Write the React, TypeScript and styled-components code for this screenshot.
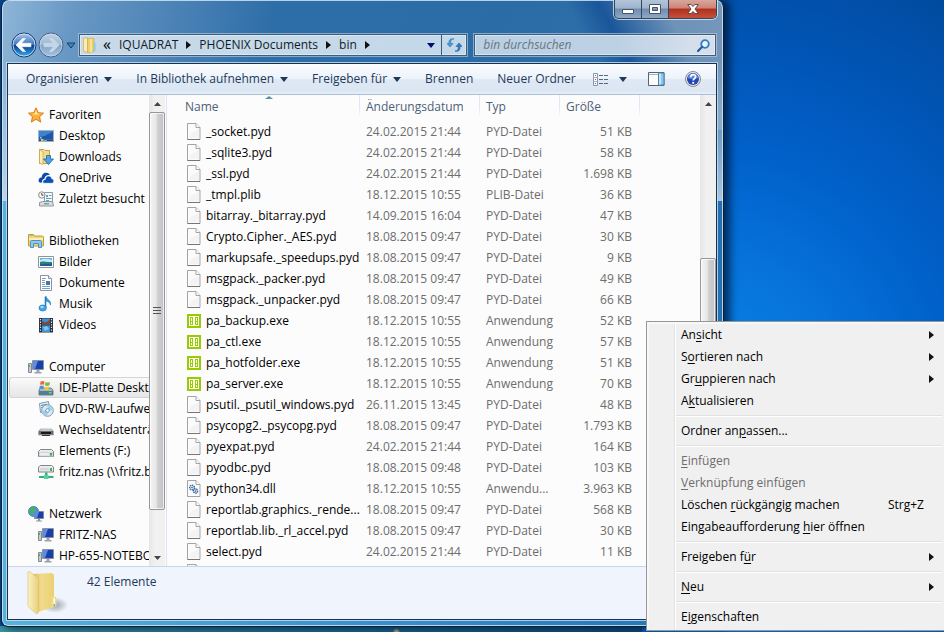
import React from "react";
import styled, { createGlobalStyle, css } from "styled-components";

const GlobalStyle = createGlobalStyle`
  *, *::before, *::after { box-sizing: border-box; }
  html, body { margin: 0; padding: 0; }
  body { font-family: "Open Sans", "Noto Sans", sans-serif; font-size: 12px; line-height: 16px; color: #000; }
  button, input { font: inherit; color: inherit; margin: 0; }
  button { background: none; border: 0; padding: 0; text-align: left; }
  ul { list-style: none; margin: 0; padding: 0; }
`;

/* ---------- desktop and window frame ---------- */

const Desktop = styled.div`
  position: relative;
  display: flex;
  height: 100vh;
  overflow: hidden;
  padding: 0 220px 5px 1px;
  background:
    radial-gradient(circle at 42% 100%, #c9ad7c 0, #c9ad7c 1px, transparent 4px),
    linear-gradient(90deg, #3a97a0 0, #1f6f96 30%, #0b4a7c 68%, transparent 68%) bottom / 100% 6px no-repeat,
    radial-gradient(circle at 700px 400px, #0b86ea 0, #0672da 150px, #0161cb 250px, #0154b4 370px, #014a9c 480px);
`;

const Window = styled.main`
  flex: 1;
  min-width: 0;
  display: flex;
  flex-direction: column;
  border: 1px solid #0c1f33;
  border-top: 0;
  border-radius: 8px 8px 7px 7px;
  padding: 0 6px 6px 5px;
  background:
    linear-gradient(180deg, rgba(255, 255, 255, 0.02) 60px, rgba(215, 232, 245, 0.72) 201px, transparent 201px) no-repeat,
    linear-gradient(100deg, rgba(165, 198, 226, 0.8) 0, rgba(140, 178, 214, 0.6) 70px, rgba(100, 150, 200, 0) 270px) top / 100% 201px no-repeat,
    linear-gradient(62deg, transparent 80%, rgba(20, 80, 150, 0.9) 84%, rgba(110, 146, 184, 0.95) 92%, #7595ba 100%) top / 100% 130px no-repeat,
    linear-gradient(90deg, #57b2dc 0, #3a90cc 50%, #2371b4 100%) bottom / 100% calc(100% - 201px) no-repeat,
    linear-gradient(100deg, #2e6da8 0, #2769a5 60%, #2d6fac 100%);
  box-shadow:
    inset 0 0 0 1px rgba(205, 228, 244, 0.85),
    4px 0 9px 2px rgba(0, 15, 40, 0.7);
`;

const CaptionBar = styled.div`
  display: flex;
  justify-content: flex-end;
  height: 19px;
`;

const CaptionGroup = styled.div`
  display: flex;
  border: 1px solid #33455c;
  border-top: 0;
  border-radius: 0 0 5px 5px;
  overflow: hidden;
  box-shadow: 0 0 0 1px rgba(220, 232, 243, 0.8);
`;

const CaptionButton = styled.button<{ $close?: boolean }>`
  display: grid;
  place-items: center;
  width: ${(p) => (p.$close ? 47 : 27)}px;
  height: 18px;
  border-right: 1px solid #33455c;
  background: ${(p) =>
    p.$close
      ? "linear-gradient(#d9a69c 0, #cb8477 45%, #b0301c 50%, #c4513c 100%)"
      : "linear-gradient(#b3c4d8 0, #9fb3cc 45%, #6f8cae 50%, #8fa9c6 100%)"};
  &:last-child { border-right: 0; }
`;

const AddressRow = styled.div`
  display: flex;
  align-items: center;
  height: 24px;
  margin: 14px 0 6px;
  padding-left: 4px;
`;

const HistoryButtons = styled.div`
  display: flex;
  align-items: center;
  width: 68px;
  flex: none;
`;

const PlainButton = styled.button<{ $gap?: number }>`
  display: grid;
  place-items: center;
  flex: none;
  margin-left: ${(p) => p.$gap ?? 0}px;
`;

const fieldFrame = css`
  display: flex;
  align-items: center;
  min-width: 0;
  height: 22px;
  border: 1px solid #3f5c7c;
  box-shadow: 0 0 0 1px rgba(190, 214, 234, 0.6), inset 0 0 0 1px rgba(235, 243, 250, 0.6);
`;

const AddressField = styled.div`
  ${fieldFrame}
  flex: 382 1 0;
  padding-left: 3px;
  background: linear-gradient(90deg, #c8dae9, #c3d8e9);
`;

const SearchField = styled.label`
  ${fieldFrame}
  flex: 226 1 0;
  margin: 0 1px 0 7px;
  padding: 0 5px 0 8px;
  background: linear-gradient(100deg, #b9d0e3 0, #bdd1e5 60%, #d4dfeb 90%);
`;

const SearchInput = styled.input`
  flex: 1;
  min-width: 0;
  border: 0;
  padding: 0;
  outline: 0;
  background: transparent;
  font-style: italic;
  &::placeholder { color: #6b7681; opacity: 1; }
`;

const Crumb = styled.button`
  padding: 0 8px;
  white-space: nowrap;
  color: #111c28;
`;

const Chevrons = styled.span`
  width: 14px;
  text-align: right;
  font-size: 16px;
  line-height: 16px;
  padding-bottom: 2px;
`;

const FieldSpacer = styled.span`
  flex: 1;
`;

const RefreshButton = styled.button`
  display: grid;
  place-items: center;
  width: 25px;
  height: 20px;
  margin-left: 6px;
  border-left: 1px solid #3f5c7c;
`;

/* ---------- client area ---------- */

const Client = styled.div`
  flex: 1;
  min-height: 0;
  display: flex;
  flex-direction: column;
  border: 1px solid #173350;
  box-shadow: 0 0 0 1px rgba(195, 220, 240, 0.85);
  background: #fcfcfc;
`;

const Toolbar = styled.div`
  display: flex;
  align-items: center;
  flex: none;
  height: 31px;
  padding: 0 15px 0 6px;
  border-bottom: 1px solid #a9bfd6;
  background: linear-gradient(#fbfdff 0, #edf3fb 48%, #dfe9f5 52%, #dbe6f3 90%, #e8f0f9 100%);
`;

const ToolButton = styled.button`
  display: flex;
  align-items: center;
  gap: 6px;
  padding: 0 12px;
  white-space: nowrap;
  color: #1e395b;
`;

const ToolIcons = styled.div`
  display: flex;
  align-items: center;
  margin-left: auto;
`;

const ToolIcon = styled.button<{ $gap: number }>`
  display: grid;
  place-items: center;
  margin-left: ${(p) => p.$gap}px;
`;

const Body = styled.div`
  flex: 1;
  min-height: 0;
  display: flex;
`;

const NavPane = styled.nav`
  width: 141px;
  flex: none;
  overflow: hidden;
  padding: 9px 0 0 1px;
`;

const NavGroup = styled.ul`
  margin-bottom: 21px;
`;

const NavItem = styled.li<{ $selected?: boolean }>`
  border: 1px solid transparent;
  border-right: 0;
  border-radius: 3px 0 0 3px;
  ${(p) =>
    p.$selected &&
    css`
      border-color: #d5d5d5;
      background: linear-gradient(#fafafa, #e6e6e6);
    `}
`;

const NavLink = styled.a<{ $root?: boolean }>`
  display: flex;
  align-items: center;
  gap: 5px;
  height: 19px;
  padding-left: ${(p) => (p.$root ? 18 : 28)}px;
  white-space: nowrap;
  color: #000;
  text-decoration: none;
  svg { flex: none; }
`;

const ScrollBar = styled.div<{ $tail?: boolean }>`
  display: flex;
  flex-direction: column;
  flex: none;
  width: 16px;
  margin-right: ${(p) => (p.$tail ? 0 : 1)}px;
  background: linear-gradient(90deg, #e6e6e6, #f1f1f1 40%, #f0f0f0);
`;

const ScrollButton = styled.button`
  display: grid;
  place-items: center;
  height: 17px;
  flex: none;
`;

const Track = styled.div`
  flex: 1;
  display: flex;
  flex-direction: column;
`;

const Gap = styled.div<{ $grow: number }>`
  flex: ${(p) => p.$grow} 1 0;
`;

const Thumb = styled.div<{ $grow: number }>`
  flex: ${(p) => p.$grow} 1 0;
  display: grid;
  place-items: center;
  border: 1px solid #979797;
  border-radius: 2px;
  box-shadow: inset 0 0 0 1px rgba(255, 255, 255, 0.7);
  background: linear-gradient(90deg, #f4f4f4 0, #e6e6e6 45%, #cfcfcf 55%, #c3c3c8 100%);
`;

const FilePane = styled.section`
  flex: 1;
  min-width: 0;
  overflow: hidden;
  border-left: 1px solid #d9e5f2;
`;

const FileTable = styled.table`
  width: 100%;
  table-layout: fixed;
  border-collapse: collapse;
`;

const HeadCell = styled.th<{ $sorted?: boolean }>`
  height: 26px;
  padding: ${(p) => (p.$sorted ? "1px 8px 0 18px" : "4px 0 0 6px")};
  vertical-align: top;
  text-align: left;
  font-weight: 400;
  color: #4c607a;
  background: linear-gradient(#dfe8f4, #dfe8f4 60%, transparent) right top / 1px 22px no-repeat;
  &:last-child { background: none; }
`;

const HeadLabel = styled.span`
  display: block;
  white-space: nowrap;
`;

const SortMark = styled.svg`
  display: block;
  margin: 0 auto;
`;

const Cell = styled.td<{ $kind?: "name" | "size" }>`
  height: 21px;
  padding: ${(p) => (p.$kind === "name" ? "0 0 0 20px" : p.$kind === "size" ? "0 8px 0 0" : "0 0 0 6px")};
  overflow: hidden;
  white-space: nowrap;
  text-align: ${(p) => (p.$kind === "size" ? "right" : "left")};
  color: ${(p) => (p.$kind === "name" ? "#000" : "#6d6d6d")};
`;

const FileName = styled.span`
  display: flex;
  align-items: center;
  gap: 5px;
  svg { flex: none; }
`;

const DetailsPane = styled.footer`
  flex: none;
  display: flex;
  height: 53px;
  border-top: 1px solid #c5d7ea;
  padding: 4px 0 0 19px;
  gap: 18px;
  background: #f0f4fc;
  color: #1e395b;
`;

const DetailsText = styled.p`
  margin: 3px 0 0;
`;

/* ---------- context menu ---------- */

const Menu = styled.div`
  position: absolute;
  right: 0;
  bottom: 1px;
  width: 298px;
  padding: 2px 2px 2px 2px;
  border: 1px solid #979797;
  border-right: 0;
  background: linear-gradient(90deg, #f0f0f0 0, #f0f0f0 27px, #e2e3e3 27px, #e2e3e3 28px, #fff 28px, #fff 29px, #f0f0f0 29px);
  box-shadow: inset 1px 1px 0 1px #f7f7f7;
`;

const MenuItem = styled.button`
  display: flex;
  align-items: center;
  width: 100%;
  height: 22px;
  padding: 0 8px 0 32px;
  white-space: nowrap;
  color: #000;
  &:disabled { color: #6d6d6d; }
`;

const MenuText = styled.span`
  flex: 1;
  u { text-underline-offset: 2px; }
`;

const Shortcut = styled.span`
  padding-right: 10px;
`;

const MenuRule = styled.hr`
  height: 2px;
  margin: 3px 0 3px 27px;
  border: 0;
  border-top: 1px solid #e0e0e0;
  border-bottom: 1px solid #fff;
`;

/* ---------- icons ---------- */

const I = ({ w = 16, h = 16, children }: { w?: number; h?: number; children: React.ReactNode }) => (
  <svg width={w} height={h} viewBox={`0 0 ${w} ${h}`} aria-hidden="true">{children}</svg>
);

const Down = ({ fill = "#1e395b" }: { fill?: string }) => (
  <I w={8} h={5}><path d="M0 0h8L4 5z" fill={fill} /></I>
);
const Right = () => <I w={5} h={8}><path d="M0 0l5 4-5 4z" fill="#111" /></I>;

const PageIcon = () => (
  <I w={14} h={17}>
    <path d="M.5.5h8.500l4 4v12H.5z" fill="#fbfbfb" stroke="#a3a3a3" />
    <path d="M2 15h10V6L4 10z" fill="#f0f0f0" opacity=".7" />
    <path d="M9 .5v4h4" fill="#fff" stroke="#a3a3a3" />
    <path d="M.5 16.500h12.500" stroke="#7a7474" />
  </I>
);
const DllIcon = () => (
  <I w={14} h={17}>
    <path d="M.5.5h8.500l4 4v12H.5z" fill="#fbfbfb" stroke="#a3a3a3" />
    <path d="M9 .5v4h4" fill="#fff" stroke="#a3a3a3" />
    <circle cx="5" cy="7.500" r="2.400" fill="#d7e6f5" stroke="#2f5f98" strokeWidth="1.200" strokeDasharray="1.400 .6" />
    <circle cx="5" cy="7.500" r=".8" fill="#2f5f98" />
    <circle cx="8.500" cy="11" r="2.200" fill="#d7e6f5" stroke="#2f5f98" strokeWidth="1.200" strokeDasharray="1.400 .6" />
    <circle cx="8.500" cy="11" r=".8" fill="#2f5f98" />
  </I>
);
const ExeIcon = () => (
  <I w={14} h={14}>
    <path d="M0 0h14v14H0z" fill="#99cc00" />
    <path d="M2 2h10v10H2z" fill="#fff" />
    <path d="M3 3h3v8H3zM8 3h3v8H8z" fill="#99cc00" />
    <path d="M4 4h1v3H4zM4 8h1v2H4zM9 4h1v3H9zM9 8h1v2H9z" fill="#fff" />
  </I>
);
const StarIcon = () => (
  <I>
    <path d="M8 .8l2.200 4.900 5.300.5-4 3.600 1.200 5.300L8 12.300l-4.700 2.800 1.200-5.300-4-3.600 5.300-.5z" fill="#fbb03a" stroke="#d97a1c" strokeLinejoin="round" />
    <path d="M8 2.800l1.500 3.700 3.500.4-5 .9-4.800-1 3.400-.3z" fill="#fde39a" />
  </I>
);
const DesktopIcon = () => (
  <I>
    <path d="M0 2h16v12H0z" fill="#9db4cc" />
    <path d="M1 3h14v8.500H1z" fill="#1f55ad" />
    <path d="M1 9C6 9 10 6 15 3.500V3H1z" fill="#3f83cf" />
    <path d="M1 11.500h14V13H1z" fill="#27466f" />
    <path d="M2 9h1.500v1.500H2z" fill="#9fd4ff" /><path d="M3 11h2.500v2H3z" fill="#f2c93d" />
    <path d="M6 12h3v1H6z" fill="#59a7ee" />
  </I>
);
const DownloadIcon = () => (
  <I>
    <path d="M1.500.5H6l1 1h4.500v13h-10z" fill="#f3dc87" stroke="#c7a046" />
    <path d="M1.500.5L5 3v12.500L1.500 14z" fill="#fbefb5" stroke="#c7a046" strokeWidth=".7" />
    <path d="M8.500 6.500h4V10H15.500l-5 5.500-5-5.500h3z" fill="#4da3e6" stroke="#1e62ab" strokeWidth=".8" strokeLinejoin="round" />
  </I>
);
const OneDriveIcon = () => (
  <I>
    <path d="M.8 11.500C0 8.800 2 7.200 3.800 7.400 3.700 4.500 6 2.600 8.300 2.800c1.800.1 3 1 3.600 2.300-3.200-.6-5.200 1.300-5.500 3.600-2 .2-2.600 1.800-2.200 3.800-1.400.3-2.900.2-3.400-1z" fill="#0a4aa8" />
    <path d="M5.200 13.300c-1-2.400.3-3.900 2.100-3.900 0-2.200 1.700-3.700 3.600-3.500 1.600.2 2.700 1.200 2.900 2.900 1.500.2 2.300 1.400 2 2.700-.2 1-1 1.800-2 1.800z" fill="#0d4fb4" stroke="#fff" strokeWidth=".7" />
  </I>
);
const RecentIcon = () => (
  <I>
    <path d="M6.500 1.500h8v10h-8z" fill="#f4f8fb" stroke="#8c98a3" />
    <path d="M8 4h2v2H8zM11 4h2.500v1H11zM8 7h5.500v1H8zM8 9h3v1.500H8z" fill="#5d9fce" />
    <path d="M1.500 11.500l3-1h10l1 4.500h-14z" fill="#d9dde0" stroke="#8c98a3" />
    <path d="M6 12h5v1.500H6z" fill="#6ab389" />
    <circle cx="3.800" cy="4" r="3.200" fill="#f6f6f6" stroke="#8e8e8e" /><path d="M3.800 2v2.200h1.700" fill="none" stroke="#555" />
  </I>
);
const LibraryIcon = () => (
  <I>
    <path d="M.5 13V1.500h5l1 1.500h8l1 1v9z" fill="#f0d67a" stroke="#c39c3a" />
    <path d="M2 1.500h3v1H2z" fill="#5fb75a" />
    <path d="M1 5h14v2H1z" fill="#fcf0b8" />
    <path d="M2.500 14.500V9c0-1 .5-1.500 1.500-1.500h8c1 0 1.500.5 1.500 1.500v5.500h-3v-4h-5v4z" fill="#8fc9ec" stroke="#4c91c3" />
  </I>
);
const PicturesIcon = () => (
  <I>
    <path d="M.5 2.500h15v11H.5z" fill="#fff" stroke="#8b95a0" />
    <path d="M2 4h12v8H2z" fill="#5daee3" /><path d="M2 6c4-2 8-1 12 0v2H2z" fill="#c9e8f7" />
    <path d="M2 8c3-1.500 6 .5 12 0v4H2z" fill="#2f7f79" /><path d="M2 10.500c5-1 8 0 12-1V12H2z" fill="#1f5a9c" />
  </I>
);
const DocIcon = () => (
  <I>
    <path d="M2.500.5h8l3 3v12h-11z" fill="#fff" stroke="#8b95a0" /><path d="M10.500.5v3h3" fill="#e8eef4" stroke="#8b95a0" />
    <path d="M4 3.500h4M4 5.500h3M4 7.500h3M4 9.500h3M4 11.500h8M4 13.500h8" stroke="#7f9fbe" />
    <path d="M8 6h4v4H8z" fill="#3f76b3" />
  </I>
);
const MusicIcon = () => (
  <I>
    <path d="M7.500.5v11" stroke="#1e7fc8" strokeWidth="1.600" />
    <path d="M8 .5c.5 3 5.500 3.500 4.500 8.500C12 6.500 10 5.500 8 5z" fill="#3aa1e2" stroke="#1b74bb" strokeWidth=".6" />
    <ellipse cx="4.700" cy="12" rx="3.700" ry="3" fill="#41a8e8" stroke="#1b74bb" strokeWidth=".7" />
    <ellipse cx="4" cy="11" rx="1.700" ry="1" fill="#b6e1fb" />
  </I>
);
const VideoIcon = () => (
  <I>
    <path d="M1 1h14v14.500H1z" fill="#26303c" />
    <path d="M4 1.500h8v6H4zM4 8.500h8v6.500H4z" fill="#3d8fd6" />
    <path d="M4 4l4 1.500 4-3v5H4z" fill="#7a4a3d" /><path d="M5 10l4-1 2 3-4 2z" fill="#7ec3f0" />
    <path d="M2.500 2v13M13.500 2v13" stroke="#e4e8ec" strokeWidth="1.200" strokeDasharray="1.300 1.300" />
  </I>
);
const ComputerIcon = () => (
  <I>
    <path d="M.5 4.500h3v9h-3z" fill="#c3cad2" stroke="#818a94" /><path d="M1 6h1v2H1z" fill="#43b54a" />
    <path d="M4.500 1.500h11v9h-11z" fill="#d4d9de" stroke="#8b929a" />
    <path d="M5 2h10v8H5z" fill="#173fae" /><path d="M5 2h5L7 10H5z" fill="#5c8ae6" />
    <path d="M8.500 11h3v2h-3zM6.500 13h7v1.500h-7z" fill="#9aa2ab" />
  </I>
);
const SystemDriveIcon = () => (
  <I>
    <path d="M1 10l2-2h10l2 2v5H1z" fill="#aeb8bf" stroke="#626b72" strokeWidth=".8" />
    <path d="M1 11h14v4H1z" fill="#4e7f93" /><path d="M11 12h2.500v1.500H11z" fill="#62e36e" />
    <path d="M2.500 1.500c1.500-.8 3-.8 4 0L6 5c-1-.6-2.500-.6-4 0z" fill="#ee6a35" />
    <path d="M7.500 2c1.500.8 3 .7 4.500 0l-.7 3.500c-1.500.6-3 .6-4.300 0z" fill="#74bb42" />
    <path d="M1.800 6c1.500-.7 2.900-.7 4 0l-.6 3c-1-.5-2.500-.5-4 0z" fill="#4a92de" />
    <path d="M6.800 6.500c1.500.7 2.900.7 4.300 0l-.6 3c-1.400.6-2.900.6-4.300 0z" fill="#f7c636" />
  </I>
);
const DvdIcon = () => (
  <I>
    <path d="M1.500 2.500l9-2 1 9-9 2z" fill="#e3eef6" stroke="#8098ab" />
    <path d="M3 4.500l6-1.200M3.200 6.500l3-.6" stroke="#3f8ac0" />
    <circle cx="9.500" cy="9.500" r="5.800" fill="#dcebf5" stroke="#7b9cb6" />
    <path d="M9.500 3.700a5.800 5.800 0 0 1 5.800 5.800l-5.800 0z" fill="#a5d0ec" /><path d="M9.500 15.300a5.800 5.800 0 0 1-5.800-5.800h5.800z" fill="#a5cbe6" />
    <circle cx="9.500" cy="9.500" r="1.800" fill="#fff" stroke="#6a93b3" />
  </I>
);
const RemovableIcon = () => (
  <I>
    <path d="M.5 9.500l2-2.500h11l2 2.500v3.500H.5z" fill="#6a6f74" stroke="#a3a8ad" strokeWidth=".8" />
    <path d="M3 7h10l1.500 2h-13z" fill="#c4c8cb" /><path d="M3 10h10v2H3z" fill="#17191b" /><path d="M4 13h8v1H4z" fill="#33373b" />
  </I>
);
const DriveIcon = () => (
  <I>
    <path d="M.5 8.500l2-2h11l2 2v5H.5z" fill="#e9ebed" stroke="#7e858b" />
    <path d="M1 9h14v4.500H1z" fill="#cfd4d8" /><path d="M2 10h9v2.500H2z" fill="#eceeef" /><path d="M12 10h2v2.500h-2z" fill="#42b04b" />
  </I>
);
const NetDriveIcon = () => (
  <I>
    <path d="M.5 3l2-1.500h11l2 1.500v5H.5z" fill="#e9ebed" stroke="#7e858b" />
    <path d="M2 4h9v2.500H2z" fill="#d4d8db" /><path d="M12 4h2v3h-2z" fill="#42b04b" />
    <path d="M7 8.500h2.500V12H7zM1 12h14.500v2H1z" fill="#35b07a" /><path d="M6 11h4.500v4H6z" fill="#5dcf9c" />
  </I>
);
const NetworkIcon = () => (
  <I>
    <circle cx="5.500" cy="5.500" r="5" fill="#3f9ae0" stroke="#2b74b3" strokeWidth=".8" />
    <path d="M2 3c2-3 5-2 5 0S5 5 5 7 3 9 2 7 1 4 2 3zM8 6l2-1v3H8z" fill="#4db34f" />
    <path d="M6.500 5.500h9v7h-9z" fill="#d4d9de" stroke="#7f8891" /><path d="M7 6h8v6H7z" fill="#173fae" /><path d="M7 6h4l-2 6H7z" fill="#5c8ae6" />
    <path d="M10 13h2v1.500h-2zM8 14.500h6v1H8z" fill="#8e98a2" />
  </I>
);

const BackIcon = ({ active }: { active?: boolean }) => {
  const id = active ? "nav-back" : "nav-forward";
  return (
    <svg width="26" height="26" viewBox="0 0 26 26" aria-hidden="true">
      <defs>
        <linearGradient id={id} x1="0" y1="0" x2="0" y2="1">
          <stop offset="0" stopColor={active ? "#a9c9ee" : "#c2d3e3"} />
          <stop offset=".48" stopColor={active ? "#3d78c0" : "#9db9d3"} />
          <stop offset=".52" stopColor={active ? "#0a3f92" : "#83a4c5"} />
          <stop offset="1" stopColor={active ? "#36b2f2" : "#a5c4de"} />
        </linearGradient>
      </defs>
      <circle cx="13" cy="13" r="12" fill={`url(#${id})`} stroke={active ? "#173a68" : "#3f618a"} />
      <circle cx="13" cy="13" r="11" fill="none" stroke="#dceaf7" strokeOpacity={active ? 0.8 : 0.5} />
      <path
        d={active ? "M5 13l6.500-6.500h3L10.500 11.300H20v3.400h-9.500l4 4.800h-3z" : "M21 13l-6.500-6.500h-3l4 4.800H6v3.400h9.500l-4 4.800h3z"}
        fill={active ? "#fff" : "#c3d6e8"}
        stroke={active ? "#fff" : "#d0e0ee"}
        strokeWidth=".6"
      />
    </svg>
  );
};

const AddressFolder = () => (
  <I w={14} h={16}>
    <path d="M.5 1.500l4-.8v14.800l-4-1.500z" fill="#f9eeb0" stroke="#cfae55" strokeWidth=".7" />
    <path d="M4.500 1.500h6.500v13l-6.500 1z" fill="#ecd06e" stroke="#cfae55" strokeWidth=".7" />
    <path d="M7 2h2v13H7z" fill="#f8e59a" /><path d="M11 6h1.500v8H11z" fill="#8cc7ee" />
  </I>
);
const RefreshIcon = () => (
  <I w={15} h={14}>
    <path d="M7 1C4 1 3.500 3 3.800 5.500H6L3 9 0 5.500h2C1.500 2 3.500 0 7 1z" fill="#4f9bd8" stroke="#2c70b4" strokeWidth=".6" />
    <path d="M8 13c3 0 3.500-2 3.200-4.500H9L12 5l3 3.500h-2c.5 3.500-1.500 5.500-5 4.500z" fill="#2f7fc6" stroke="#1d5a9e" strokeWidth=".6" />
  </I>
);
const SearchIcon = () => (
  <I w={13} h={13}>
    <circle cx="8" cy="5" r="3.800" fill="#e9f4fd" stroke="#2f7cc7" strokeWidth="1.800" />
    <path d="M5.200 7.800L1 12" stroke="#26599f" strokeWidth="2.200" strokeLinecap="round" />
  </I>
);
const ViewIcon = () => (
  <I w={16} h={13}>
    <path d="M.5.500h4v12h-4z" fill="#fff" stroke="#8797aa" />
    <path d="M2 2h1v1H2z" fill="#4f81bd" /><path d="M2 6h1v1H2z" fill="#d0383b" /><path d="M2 10h1v1H2z" fill="#3e74b8" />
    <path d="M.5 4.500h4M.5 8.500h4" stroke="#a9b5c2" />
    <path d="M6 2.500h4M11 2.500h4M6 6.500h4M11 6.500h4M6 10.500h4M11 10.500h4" stroke="#54687f" />
  </I>
);
const PaneIcon = () => (
  <I w={17} h={14}>
    <path d="M.5.500h15.500v13H.5z" fill="#fdfdfd" stroke="#4f6379" />
    <path d="M1 2.500h9.500" stroke="#a3b1c0" /><path d="M10.500 1H16v12h-5.500z" fill="#8ac6ea" stroke="#4f7fa6" /><path d="M11 1.500h2v11h-2z" fill="#c5e6f8" />
  </I>
);
const HelpIcon = () => (
  <svg width="16" height="16" viewBox="0 0 16 16" aria-hidden="true">
    <circle cx="8" cy="8" r="7.500" fill="#e8e8e8" stroke="#8a8a8a" />
    <circle cx="8" cy="8" r="6" fill="#2344b4" /><path d="M2.500 7a5.600 5.600 0 0 1 11 0c-3 1.500-8 1.500-11 0z" fill="#5f86dc" />
    <path d="M5.700 6.200c0-3.400 4.900-3.200 4.900-.5C10.600 7.500 8.200 7.600 8.200 9.500" fill="none" stroke="#fff" strokeWidth="1.700" />
    <circle cx="8.200" cy="11.800" r="1.100" fill="#fff" />
  </svg>
);
const BigFolder = () => (
  <svg width="42" height="44" viewBox="0 0 42 44" aria-hidden="true">
    <defs>
      <linearGradient id="folder-front" x1="0" x2="1"><stop offset="0" stopColor="#fbf2c3" /><stop offset="1" stopColor="#e9cf7c" /></linearGradient>
      <linearGradient id="folder-back" x1="0" x2="1"><stop offset="0" stopColor="#d8b95c" /><stop offset=".4" stopColor="#f1dc8d" /><stop offset="1" stopColor="#ead06f" /></linearGradient>
      <radialGradient id="folder-shade"><stop offset="0" stopColor="#5e6470" stopOpacity=".6" /><stop offset="1" stopColor="#5e6470" stopOpacity="0" /></radialGradient>
    </defs>
    <ellipse cx="28" cy="34" rx="13" ry="8" fill="url(#folder-shade)" />
    <path d="M6 3l19-1 2 2v32l-16 5z" fill="url(#folder-back)" />
    <path d="M24 26h4c1 0 1.500.5 1.500 1.500v8L24 37z" fill="#efd984" />
    <path d="M1 1c0-.8.500-1 1.300-.5L10 6c1 .8 1.500 1.500 1.500 3v31c0 2.500-1.500 3.500-3 2L2 36.500c-.7-.5-1-1-1-2z" fill="url(#folder-front)" stroke="#d9be6c" strokeWidth=".6" />
    <path d="M26.500 27h1.500v8h-1.500z" fill="#fff" /><path d="M26.500 33h1.500v2.500h-1.500z" fill="#59aee0" />
  </svg>
);

/* ---------- data ---------- */

type NavEntry = { label: string; icon: React.ReactNode; selected?: boolean };

const navGroups: NavEntry[][] = [
  [
    { label: "Favoriten", icon: <StarIcon /> },
    { label: "Desktop", icon: <DesktopIcon /> },
    { label: "Downloads", icon: <DownloadIcon /> },
    { label: "OneDrive", icon: <OneDriveIcon /> },
    { label: "Zuletzt besucht", icon: <RecentIcon /> },
  ],
  [
    { label: "Bibliotheken", icon: <LibraryIcon /> },
    { label: "Bilder", icon: <PicturesIcon /> },
    { label: "Dokumente", icon: <DocIcon /> },
    { label: "Musik", icon: <MusicIcon /> },
    { label: "Videos", icon: <VideoIcon /> },
  ],
  [
    { label: "Computer", icon: <ComputerIcon /> },
    { label: "IDE-Platte Desktop", icon: <SystemDriveIcon />, selected: true },
    { label: "DVD-RW-Laufwerk", icon: <DvdIcon /> },
    { label: "Wechseldatenträger", icon: <RemovableIcon /> },
    { label: "Elements (F:)", icon: <DriveIcon /> },
    { label: "fritz.nas (\\\\fritz.box)", icon: <NetDriveIcon /> },
  ],
  [
    { label: "Netzwerk", icon: <NetworkIcon /> },
    { label: "FRITZ-NAS", icon: <ComputerIcon /> },
    { label: "HP-655-NOTEBOOK", icon: <ComputerIcon /> },
  ],
];

const files: [string, string, string, string][] = [
  ["_socket.pyd", "24.02.2015 21:44", "PYD-Datei", "51 KB"],
  ["_sqlite3.pyd", "24.02.2015 21:44", "PYD-Datei", "58 KB"],
  ["_ssl.pyd", "24.02.2015 21:44", "PYD-Datei", "1.698 KB"],
  ["_tmpl.plib", "18.12.2015 10:55", "PLIB-Datei", "36 KB"],
  ["bitarray._bitarray.pyd", "14.09.2015 16:04", "PYD-Datei", "47 KB"],
  ["Crypto.Cipher._AES.pyd", "18.08.2015 09:47", "PYD-Datei", "30 KB"],
  ["markupsafe._speedups.pyd", "18.08.2015 09:47", "PYD-Datei", "9 KB"],
  ["msgpack._packer.pyd", "18.08.2015 09:47", "PYD-Datei", "49 KB"],
  ["msgpack._unpacker.pyd", "18.08.2015 09:47", "PYD-Datei", "66 KB"],
  ["pa_backup.exe", "18.12.2015 10:55", "Anwendung", "52 KB"],
  ["pa_ctl.exe", "18.12.2015 10:55", "Anwendung", "57 KB"],
  ["pa_hotfolder.exe", "18.12.2015 10:55", "Anwendung", "51 KB"],
  ["pa_server.exe", "18.12.2015 10:55", "Anwendung", "70 KB"],
  ["psutil._psutil_windows.pyd", "26.11.2015 13:45", "PYD-Datei", "48 KB"],
  ["psycopg2._psycopg.pyd", "18.08.2015 09:47", "PYD-Datei", "1.793 KB"],
  ["pyexpat.pyd", "24.02.2015 21:44", "PYD-Datei", "164 KB"],
  ["pyodbc.pyd", "18.08.2015 09:48", "PYD-Datei", "103 KB"],
  ["python34.dll", "18.12.2015 10:55", "Anwendu...", "3.963 KB"],
  ["reportlab.graphics._rende...", "18.08.2015 09:47", "PYD-Datei", "568 KB"],
  ["reportlab.lib._rl_accel.pyd", "18.08.2015 09:47", "PYD-Datei", "30 KB"],
  ["select.pyd", "24.02.2015 21:44", "PYD-Datei", "11 KB"],
  ["", "", "", ""],
];

const iconFor = (name: string) =>
  name.endsWith(".exe") ? <ExeIcon /> : name.endsWith(".dll") ? <DllIcon /> : <PageIcon />;

type Entry = { text: [string, string, string]; sub?: boolean; off?: boolean; keys?: string };

const menuGroups: Entry[][] = [
  [
    { text: ["An", "s", "icht"], sub: true },
    { text: ["S", "o", "rtieren nach"], sub: true },
    { text: ["Gr", "u", "ppieren nach"], sub: true },
    { text: ["A", "k", "tualisieren"] },
  ],
  [{ text: ["Ordner an", "p", "assen..."] }],
  [
    { text: ["", "E", "infügen"], off: true },
    { text: ["", "V", "erknüpfung einfügen"], off: true },
    { text: ["Löschen ", "r", "ückgängig machen"], keys: "Strg+Z" },
    { text: ["Eingabeaufforderung ", "h", "ier öffnen"] },
  ],
  [{ text: ["Freigeben f", "ü", "r"], sub: true }],
  [{ text: ["", "N", "eu"], sub: true }],
  [{ text: ["E", "i", "genschaften"] }],
];

const ScrollUp = () => (
  <ScrollButton aria-label="Nach oben"><I w={7} h={4}><path d="M0 4h7L3.500 0z" fill="#444" /></I></ScrollButton>
);
const ScrollDown = () => (
  <ScrollButton aria-label="Nach unten"><I w={7} h={4}><path d="M0 0h7L3.500 4z" fill="#444" /></I></ScrollButton>
);

export default function App() {
  return (
    <Desktop>
      <GlobalStyle />
      <Window>
        <CaptionBar>
          <CaptionGroup>
            <CaptionButton aria-label="Minimieren">
              <I w={12} h={12}><path d="M.5 6.500h11v4H.5z" fill="#fff" stroke="#46546a" /></I>
            </CaptionButton>
            <CaptionButton aria-label="Maximieren">
              <I w={12} h={12}><path d="M.5 1.500h11v9H.5zM3.500 4.500v3h5v-3z" fill="#fff" fillRule="evenodd" stroke="#46546a" /></I>
            </CaptionButton>
            <CaptionButton $close aria-label="Schließen">
              <I w={12} h={12}><path d="M.7 1.500h3.500L6 3.500l1.800-2h3.500L8 6l3.300 4.500H7.800L6 8.500l-1.800 2H.7L4 6z" fill="#fff" stroke="#5c3a40" strokeWidth=".9" /></I>
            </CaptionButton>
          </CaptionGroup>
        </CaptionBar>
        <AddressRow>
          <HistoryButtons>
            <PlainButton aria-label="Zurück"><BackIcon active /></PlainButton>
            <PlainButton $gap={1} aria-label="Vorwärts"><BackIcon /></PlainButton>
            <PlainButton $gap={2} aria-label="Verlauf">
              <I w={10} h={7}><path d="M1 1h8L5 6z" fill="#3e85bd" stroke="#173f70" /></I>
            </PlainButton>
          </HistoryButtons>
          <AddressField>
            <AddressFolder />
            <Chevrons>«</Chevrons>
            <Crumb>IQUADRAT</Crumb>
            <Right />
            <Crumb>PHOENIX Documents</Crumb>
            <Right />
            <Crumb>bin</Crumb>
            <Right />
            <FieldSpacer />
            <PlainButton aria-label="Vorherige Orte"><Down fill="#08086e" /></PlainButton>
            <RefreshButton aria-label="Aktualisieren"><RefreshIcon /></RefreshButton>
          </AddressField>
          <SearchField>
            <SearchInput type="text" placeholder="bin durchsuchen" aria-label="bin durchsuchen" />
            <SearchIcon />
          </SearchField>
        </AddressRow>
        <Client>
          <Toolbar>
            <ToolButton>Organisieren <Down /></ToolButton>
            <ToolButton>In Bibliothek aufnehmen <Down /></ToolButton>
            <ToolButton>Freigeben für <Down /></ToolButton>
            <ToolButton>Brennen</ToolButton>
            <ToolButton>Neuer Ordner</ToolButton>
            <ToolIcons>
              <ToolIcon $gap={0} aria-label="Ansicht ändern"><ViewIcon /></ToolIcon>
              <ToolIcon $gap={10} aria-label="Weitere Optionen"><Down /></ToolIcon>
              <ToolIcon $gap={21} aria-label="Vorschaufenster"><PaneIcon /></ToolIcon>
              <ToolIcon $gap={20} aria-label="Hilfe"><HelpIcon /></ToolIcon>
            </ToolIcons>
          </Toolbar>
          <Body>
            <NavPane>
              {navGroups.map((group) => (
                <NavGroup key={group[0].label}>
                  {group.map((item, i) => (
                    <NavItem key={item.label} $selected={item.selected}>
                      <NavLink href="#" $root={i === 0}>{item.icon}{item.label}</NavLink>
                    </NavItem>
                  ))}
                </NavGroup>
              ))}
            </NavPane>
            <ScrollBar>
              <ScrollUp />
              <Track>
                <Thumb $grow={398}>
                  <I w={8} h={8}><path d="M0 .5h8M0 3.500h8M0 6.500h8" stroke="#555" /></I>
                </Thumb>
                <Gap $grow={39} />
              </Track>
              <ScrollDown />
            </ScrollBar>
            <FilePane>
              <FileTable>
                <colgroup>
                  <col width="193" /><col width="120" /><col width="80" /><col width="80" /><col />
                </colgroup>
                <thead>
                  <tr>
                    <HeadCell $sorted>
                      <SortMark width="8" height="3" viewBox="0 0 8 3"><path d="M0 3h8L4 0z" fill="#5b8fae" /></SortMark>
                      <HeadLabel>Name</HeadLabel>
                    </HeadCell>
                    <HeadCell><HeadLabel>Änderungsdatum</HeadLabel></HeadCell>
                    <HeadCell><HeadLabel>Typ</HeadLabel></HeadCell>
                    <HeadCell><HeadLabel>Größe</HeadLabel></HeadCell>
                    <HeadCell />
                  </tr>
                </thead>
                <tbody>
                  {files.map(([name, date, type, size]) => (
                    <tr key={name}>
                      <Cell $kind="name"><FileName>{iconFor(name)}{name}</FileName></Cell>
                      <Cell>{date}</Cell>
                      <Cell>{type}</Cell>
                      <Cell $kind="size">{size}</Cell>
                      <Cell />
                    </tr>
                  ))}
                </tbody>
              </FileTable>
            </FilePane>
            <ScrollBar $tail>
              <ScrollUp />
              <Track>
                <Gap $grow={146} />
                <Thumb $grow={290} />
              </Track>
              <ScrollDown />
            </ScrollBar>
          </Body>
          <DetailsPane>
            <BigFolder />
            <DetailsText>42 Elemente</DetailsText>
          </DetailsPane>
        </Client>
      </Window>
      <Menu role="menu">
        {menuGroups.map((group, g) => (
          <React.Fragment key={g}>
            {g > 0 && <MenuRule />}
            {group.map(({ text: [before, key, after], sub, off, keys }) => (
              <MenuItem role="menuitem" key={before + key + after} disabled={off}>
                <MenuText>{before}<u>{key}</u>{after}</MenuText>
                {keys && <Shortcut>{keys}</Shortcut>}
                {sub && <Right />}
              </MenuItem>
            ))}
          </React.Fragment>
        ))}
      </Menu>
    </Desktop>
  );
}
